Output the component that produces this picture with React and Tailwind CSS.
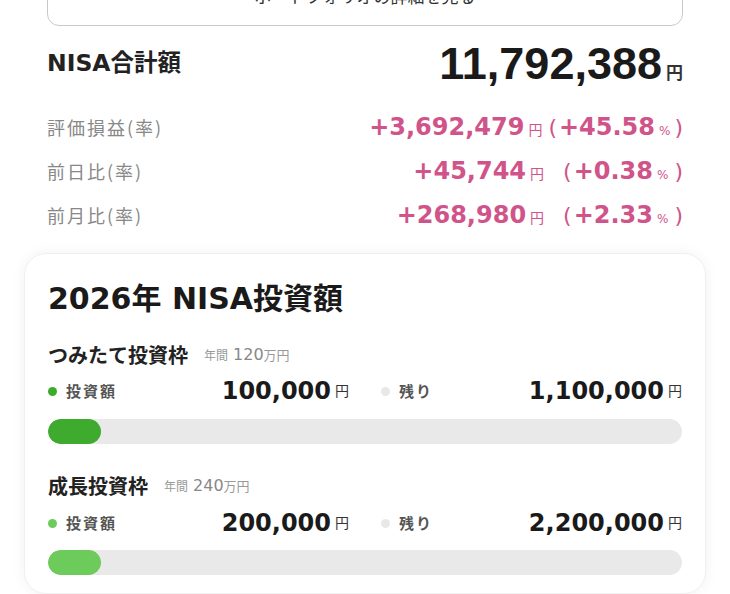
import React from 'react';

const sans = { fontFamily: '"DejaVu Sans", "Noto Sans CJK JP", sans-serif' };

// 評価損益などの行
const diffs = [
    { label: '評価損益(率)', value: '+3,692,479', pct: '+45.58', wide: false },
    { label: '前日比(率)', value: '+45,744', pct: '+0.38', wide: true },
    { label: '前月比(率)', value: '+268,980', pct: '+2.33', wide: true },
];

const frames = [
    { name: 'つみたて投資枠', limit: '120', used: '100,000', rest: '1,100,000', ratio: 100000 / 1200000, color: 'bg-[#3eab2f]' },
    { name: '成長投資枠', limit: '240', used: '200,000', rest: '2,200,000', ratio: 200000 / 2400000, color: 'bg-[#6dcb5c]' },
];

function Yen({ className = '' }) {
    return <span className={`text-[14px] font-normal ml-[4px] ${className}`}>円</span>;
}

function Frame({ f, first }) {
    return (
        <div className={first ? 'mt-[23px]' : 'mt-[28px]'}>
            <div className="h-[28px] flex items-center">
                <span className="text-[20px] font-bold text-[#222] font-['Noto_Sans_CJK_JP']">{f.name}</span>
                <span className="ml-[16px] text-[12px] text-[#999] font-['Noto_Sans_CJK_JP']">年間</span>
                <span className="ml-[5px] text-[16px] text-[#888]">{f.limit}</span>
                <span className="text-[13px] text-[#999] font-['Noto_Sans_CJK_JP']">万円</span>
            </div>
            <div className={`${first ? 'mt-[4px]' : 'mt-[5px]'} h-[34px] grid grid-cols-2 gap-[32px]`}>
                <div className="flex items-center">
                    <span className={`w-[9px] h-[9px] rounded-full ${f.color}`} />
                    <span className="ml-[9px] text-[15px] tracking-[2px] font-bold text-[#555] font-['Noto_Sans_CJK_JP']">投資額</span>
                    <span className="ml-auto text-[24px] font-bold text-[#1a1a1a]">{f.used}</span>
                    <Yen className="text-[#333]" />
                </div>
                <div className="flex items-center">
                    <span className="w-[9px] h-[9px] rounded-full bg-[#e8e8e8]" />
                    <span className="ml-[9px] text-[15px] tracking-[2px] font-bold text-[#555] font-['Noto_Sans_CJK_JP']">残り</span>
                    <span className="ml-auto text-[24px] font-bold text-[#1a1a1a]">{f.rest}</span>
                    <Yen className="text-[#333]" />
                </div>
            </div>
            <div className={`${first ? 'mt-[12px]' : 'mt-[11px]'} h-[25px] rounded-full bg-[#e9e9e9] overflow-hidden`}>
                <div className={`h-full rounded-full ${f.color}`} style={{ width: `${f.ratio * 100}%` }} />
            </div>
        </div>
    );
}

export default function App() {
    return (
        <div className="w-[730px] h-[594px] overflow-hidden bg-white" style={sans}>
            {/* 詳細ボタン（上が切れている） */}
            <div className="mt-[-34px] mx-[47px] h-[60px] rounded-[12px] border border-[#c9c9c9] flex items-center justify-center text-[17px] text-[#333] font-['Noto_Sans_CJK_JP']">
                ポートフォリオの詳細を見る
            </div>

            {/* NISA合計額 */}
            <div className="mt-[13px] mx-[47px] h-[50px] flex items-center justify-between">
                <span className="text-[23.5px] font-bold text-[#222]">NISA合計額</span>
                <span className="flex items-baseline">
                    <span className="text-[45px] font-bold text-[#1a1a1a] font-['Liberation_Sans']">11,792,388</span>
                    <span className="ml-[4px] text-[17px] font-bold text-[#333] font-['Noto_Sans_CJK_JP']">円</span>
                </span>
            </div>

            <div className="mt-[16px] mx-[47px]">
                {diffs.map((d) => (
                    <div key={d.label} className="h-[44px] flex items-center justify-between">
                        <span className="text-[18px] text-[#888] font-['Noto_Sans_CJK_JP'] tracking-[2px]">{d.label}</span>
                        <span className="flex items-baseline text-[#d0548a] font-bold">
                            <span className="text-[24px]">{d.value}</span>
                            <span className="ml-[4px] text-[14px] font-normal font-['Noto_Sans_CJK_JP']">円</span>
                            <span className={`text-[22px] font-normal ${d.wide ? 'ml-[19px]' : 'ml-[6px]'}`}>(</span>
                            <span className="ml-[2px] text-[24px]">{d.pct}</span>
                            <span className="ml-[4px] text-[12px] font-normal">%</span>
                            <span className={`text-[22px] font-normal ${d.wide ? 'ml-[6px]' : 'ml-[4px]'}`}>)</span>
                        </span>
                    </div>
                ))}
            </div>

            {/* 2026年 NISA投資額 */}
            <div className="mt-[16px] mx-[24px] rounded-[22px] border border-[#efefef] shadow-[0_0_14px_rgba(0,0,0,0.06)] px-[23px] pt-[24px] pb-[18px]">
                <div className="h-[40px] flex items-center text-[30px] font-bold text-[#1a1a1a]">2026年 NISA投資額</div>
                {frames.map((f, i) => (
                    <Frame key={f.name} f={f} first={i === 0} />
                ))}
            </div>
        </div>
    );
}
